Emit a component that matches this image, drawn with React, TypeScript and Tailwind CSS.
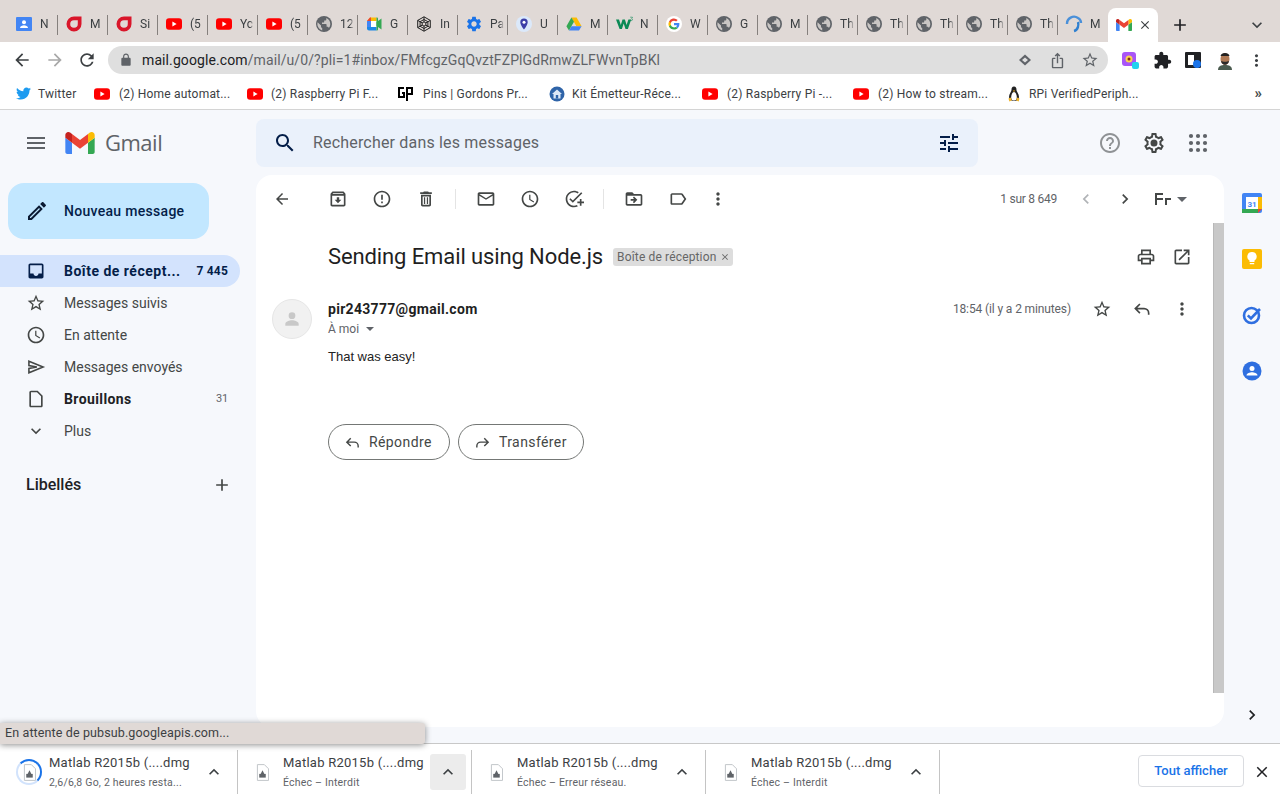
import React from "react";
import { FaTwitter } from "react-icons/fa";

const P = {
  menu: "M3 18h18v-2H3v2zm0-5h18v-2H3v2zm0-7v2h18V6H3z",
  search: "M15.5 14h-.79l-.28-.27C15.41 12.59 16 11.11 16 9.5 16 5.91 13.09 3 9.5 3S3 5.91 3 9.5 5.91 16 9.5 16c1.61 0 3.09-.59 4.23-1.57l.27.28v.79l5 4.99L20.49 19l-4.99-5zm-6 0C7.01 14 5 11.99 5 9.5S7.01 5 9.5 5 14 7.01 14 9.5 11.99 14 9.5 14z",
  tune: "M3 17v2h6v-2H3zM3 5v2h10V5H3zm10 16v-2h8v-2h-8v-2h-2v6h2zM7 9v2H3v2h4v2h2V9H7zm14 4v-2H11v2h10zm-6-4h2V7h4V5h-4V3h-2v6z",
  help: "M11 18h2v-2h-2v2zm1-16C6.48 2 2 6.48 2 12s4.48 10 10 10 10-4.48 10-10S17.52 2 12 2zm0 18c-4.41 0-8-3.59-8-8s3.59-8 8-8 8 3.59 8 8-3.59 8-8 8zm0-14c-2.21 0-4 1.79-4 4h2c0-1.1.9-2 2-2s2 .9 2 2c0 2-3 1.75-3 5h2c0-2.25 3-2.5 3-5 0-2.21-1.79-4-4-4z",
  settings: "M19.43 12.98c.04-.32.07-.64.07-.98 0-.34-.03-.66-.07-.98l2.11-1.65c.19-.15.24-.42.12-.64l-2-3.46c-.09-.16-.26-.25-.44-.25-.06 0-.12.01-.17.03l-2.49 1c-.52-.4-1.08-.73-1.69-.98l-.38-2.65C14.46 2.18 14.25 2 14 2h-4c-.25 0-.46.18-.49.42l-.38 2.65c-.61.25-1.17.59-1.69.98l-2.49-1c-.06-.02-.12-.03-.18-.03-.17 0-.34.09-.43.25l-2 3.46c-.13.22-.07.49.12.64l2.11 1.65c-.04.32-.07.65-.07.98 0 .33.03.66.07.98l-2.11 1.65c-.19.15-.24.42-.12.64l2 3.46c.09.16.26.25.44.25.06 0 .12-.01.17-.03l2.49-1c.52.4 1.08.73 1.69.98l.38 2.65c.03.24.24.42.49.42h4c.25 0 .46-.18.49-.42l.38-2.65c.61-.25 1.17-.59 1.69-.98l2.49 1c.06.02.12.03.18.03.17 0 .34-.09.43-.25l2-3.46c.12-.22.07-.49-.12-.64l-2.11-1.65zm-1.98-1.71c.04.31.05.52.05.73 0 .21-.02.43-.05.73l-.14 1.13.89.7 1.08.84-.7 1.21-1.27-.51-1.04-.42-.9.68c-.43.32-.84.56-1.25.73l-1.06.43-.16 1.13-.2 1.35h-1.4l-.19-1.35-.16-1.13-1.06-.43c-.43-.18-.83-.41-1.23-.71l-.91-.7-1.06.43-1.27.51-.7-1.21 1.08-.84.89-.7-.14-1.13c-.03-.31-.05-.54-.05-.74s.02-.43.05-.73l.14-1.13-.89-.7-1.08-.84.7-1.21 1.27.51 1.04.42.9-.68c.43-.32.84-.56 1.25-.73l1.06-.43.16-1.13.2-1.35h1.39l.19 1.35.16 1.13 1.06.43c.43.18.83.41 1.23.71l.91.7 1.06-.43 1.27-.51.7 1.21-1.07.85-.89.7.14 1.13zM12 8.5a3.5 3.5 0 1 0 0 7 3.5 3.5 0 0 0 0-7z",
  back: "M20 11H7.83l5.59-5.59L12 4l-8 8 8 8 1.41-1.41L7.83 13H20v-2z",
  forward: "M12 4l-1.41 1.41L16.17 11H4v2h12.17l-5.58 5.59L12 20l8-8z",
  reload: "M17.65 6.35C16.2 4.9 14.21 4 12 4c-4.42 0-7.99 3.58-7.99 8s3.57 8 7.99 8c3.73 0 6.84-2.55 7.73-6h-2.08c-.82 2.33-3.04 4-5.65 4-3.31 0-6-2.69-6-6s2.69-6 6-6c1.66 0 3.14.69 4.22 1.78L13 11h7V4l-2.35 2.35z",
  lock: "M18 8h-1V6c0-2.76-2.24-5-5-5S7 3.24 7 6v2H6c-1.1 0-2 .9-2 2v10c0 1.1.9 2 2 2h12c1.1 0 2-.9 2-2V10c0-1.1-.9-2-2-2zM9 6c0-1.66 1.34-3 3-3s3 1.34 3 3v2H9V6z",
  ext: "M20.5 11H19V7c0-1.1-.9-2-2-2h-4V3.5C13 2.12 11.88 1 10.5 1S8 2.12 8 3.5V5H4c-1.1 0-1.99.9-1.99 2v3.8H3.5c1.49 0 2.7 1.21 2.7 2.7s-1.21 2.7-2.7 2.7H2V20c0 1.1.9 2 2 2h3.8v-1.5c0-1.49 1.21-2.7 2.7-2.7 1.49 0 2.7 1.21 2.7 2.7V22H17c1.1 0 2-.9 2-2v-4h1.5c1.38 0 2.5-1.12 2.5-2.5S21.88 11 20.5 11z",
  archive: "M20.54 5.23l-1.39-1.68C18.88 3.21 18.47 3 18 3H6c-.47 0-.88.21-1.15.55L3.46 5.23C3.17 5.57 3 6.02 3 6.5V19c0 1.1.9 2 2 2h14c1.1 0 2-.9 2-2V6.5c0-.48-.17-.93-.46-1.27zM6.24 5h11.52l.83 1H5.42l.82-1zM5 19V8h14v11H5zm8.45-9h-2.9v3H8l4 4 4-4h-2.55z",
  report: "M11 15h2v2h-2zm0-8h2v6h-2zm.99-5C6.47 2 2 6.48 2 12s4.47 10 9.99 10C17.52 22 22 17.52 22 12S17.52 2 11.99 2zM12 20c-4.42 0-8-3.58-8-8s3.58-8 8-8 8 3.58 8 8-3.58 8-8 8z",
  trash: "M16 9v10H8V9h8m-1.5-6h-5l-1 1H5v2h14V4h-3.5l-1-1zM18 7H6v12c0 1.1.9 2 2 2h8c1.1 0 2-.9 2-2V7zM9.5 10H11v8H9.5zM13 10h1.5v8H13z",
  mail: "M20 4H4c-1.1 0-1.99.9-1.99 2L2 18c0 1.1.9 2 2 2h16c1.1 0 2-.9 2-2V6c0-1.1-.9-2-2-2zm0 14H4V8l8 5 8-5v10zm-8-7L4 6h16l-8 5z",
  clock: "M11.99 2C6.47 2 2 6.48 2 12s4.47 10 9.99 10C17.52 22 22 17.52 22 12S17.52 2 11.99 2zM12 20c-4.42 0-8-3.58-8-8s3.58-8 8-8 8 3.58 8 8-3.58 8-8 8zm.5-13H11v6l5.25 3.15.75-1.23-4.5-2.67z",
  addTask: "M22 5.18L10.59 16.6l-4.24-4.24 1.41-1.41 2.83 2.83 10-10L22 5.18zM12 20c-4.41 0-8-3.59-8-8s3.59-8 8-8c1.57 0 3.04.46 4.28 1.25l1.45-1.45C16.1 2.67 14.13 2 12 2 6.48 2 2 6.48 2 12s4.48 10 10 10c1.73 0 3.36-.44 4.78-1.22l-1.5-1.5c-1 .46-2.11.72-3.28.72zm7-5h-3v2h3v3h2v-3h3v-2h-3v-3h-2v3z",
  move: "M20 6h-8l-2-2H4c-1.1 0-1.99.9-1.99 2L2 18c0 1.1.9 2 2 2h16c1.1 0 2-.9 2-2V8c0-1.1-.9-2-2-2zm0 12H4V8h16v10zm-8.01-9l-1.41 1.41L12.16 12H8v2h4.16l-1.59 1.59L11.99 17 16 13.01 11.99 9z",
  label: "M17.63 5.84C17.27 5.33 16.67 5 16 5L5 5.01C3.9 5.01 3 5.9 3 7v10c0 1.1.9 1.99 2 1.99L16 19c.67 0 1.27-.33 1.63-.84L22 12l-4.37-6.16zM16 17H5V7h11l3.55 5L16 17z",
  more: "M12 8c1.1 0 2-.9 2-2s-.9-2-2-2-2 .9-2 2 .9 2 2 2zm0 2c-1.1 0-2 .9-2 2s.9 2 2 2 2-.9 2-2-.9-2-2-2zm0 6c-1.1 0-2 .9-2 2s.9 2 2 2 2-.9 2-2-.9-2-2-2z",
  print: "M19 8h-1V3H6v5H5c-1.66 0-3 1.34-3 3v6h4v4h12v-4h4v-6c0-1.66-1.34-3-3-3zM8 5h8v3H8V5zm8 12v2H8v-4h8v2zm2-2v-2H6v2H4v-4c0-.55.45-1 1-1h14c.55 0 1 .45 1 1v4h-2z",
  open: "M19 19H5V5h7V3H5c-1.11 0-2 .9-2 2v14c0 1.1.89 2 2 2h14c1.1 0 2-.9 2-2v-7h-2v7zM14 3v2h3.59l-9.83 9.83 1.41 1.41L19 6.41V10h2V3h-7z",
  star: "M22 9.24l-7.19-.62L12 2 9.19 8.63 2 9.24l5.46 4.73L5.82 21 12 17.27 18.18 21l-1.63-7.03L22 9.24zM12 15.4l-3.76 2.27 1-4.28-3.32-2.88 4.38-.38L12 6.1l1.71 4.04 4.38.38-3.32 2.88 1 4.28L12 15.4z",
  edit: "M3 17.25V21h3.75L17.81 9.94l-3.75-3.75L3 17.25zM5.92 19H5v-.92l9.06-9.06.92.92L5.92 19zM20.71 5.63l-2.34-2.34c-.2-.2-.45-.29-.71-.29s-.51.1-.7.29l-1.83 1.83 3.75 3.75 1.83-1.83c.39-.39.39-1.02 0-1.41z",
  inbox: "M19 3H5c-1.1 0-2 .9-2 2v14c0 1.1.9 2 2 2h14c1.1 0 2-.9 2-2V5c0-1.1-.9-2-2-2zm0 12h-4c0 1.66-1.35 3-3 3s-3-1.34-3-3H5V5h14v10z",
  draft: "M14 2H6c-1.1 0-1.99.9-1.99 2L4 20c0 1.1.89 2 1.99 2H18c1.1 0 2-.9 2-2V8l-6-6zM18 20H6V4h7.17L18 8.83V20z",
  down: "M16.59 8.59L12 13.17 7.41 8.59 6 10l6 6 6-6z",
  up: "M12 8l-6 6 1.41 1.41L12 10.83l4.59 4.58L18 14z",
  add: "M19 13h-6v6h-2v-6H5v-2h6V5h2v6h6v2z",
  left: "M15.41 7.41L14 6l-6 6 6 6 1.41-1.41L10.83 12z",
  right: "M10 6L8.59 7.41 13.17 12l-4.58 4.59L10 18l6-6z",
  close: "M19 6.41L17.59 5 12 10.59 6.41 5 5 6.41 10.59 12 5 17.59 6.41 19 12 13.41 17.59 19 19 17.59 13.41 12z",
  share: "M16 5l-1.42 1.42-1.59-1.59V16h-1.98V4.83L9.42 6.42 8 5l4-4 4 4zm4 5v11c0 1.1-.9 2-2 2H6c-1.11 0-2-.9-2-2V10c0-1.11.89-2 2-2h3v2H6v11h12V10h-3V8h3c1.1 0 2 .89 2 2z",
  cog: "M19.14 12.94c.04-.3.06-.61.06-.94 0-.32-.02-.64-.07-.94l2.03-1.58c.18-.14.23-.41.12-.61l-1.92-3.32c-.12-.22-.37-.29-.59-.22l-2.39.96c-.5-.38-1.03-.7-1.62-.94l-.36-2.54c-.04-.24-.24-.41-.48-.41h-3.84c-.24 0-.43.17-.47.41l-.36 2.54c-.59.24-1.13.57-1.62.94l-2.39-.96c-.22-.08-.47 0-.59.22L2.74 8.87c-.12.21-.08.47.12.61l2.03 1.58c-.05.3-.09.63-.09.94s.02.64.07.94l-2.03 1.58c-.18.14-.23.41-.12.61l1.92 3.32c.12.22.37.29.59.22l2.39-.96c.5.38 1.03.7 1.62.94l.36 2.54c.05.24.24.41.48.41h3.84c.24 0 .44-.17.47-.41l.36-2.54c.59-.24 1.13-.56 1.62-.94l2.39.96c.22.08.47 0 .59-.22l1.92-3.32c.12-.22.07-.47-.12-.61l-2.01-1.58zM12 15.6c-1.98 0-3.6-1.62-3.6-3.6s1.62-3.6 3.6-3.6 3.6 1.62 3.6 3.6-1.62 3.6-3.6 3.6z",
};

function Mi({ d, size = 20, color = "#444746" }: { d: string; size?: number; color?: string }) {
  return (
    <svg width={size} height={size} viewBox="0 0 24 24" fill={color} className="shrink-0">
      <path d={d} />
    </svg>
  );
}

function ReplyIcon({ flip = false, size = 20, color = "#444746" }: { flip?: boolean; size?: number; color?: string }) {
  return (
    <svg width={size} height={size} viewBox="0 0 24 24" fill="none" stroke={color} strokeWidth={2} className="shrink-0" style={flip ? { transform: "scaleX(-1)" } : undefined}>
      <path d="M9.5 6 4 11.5 9.5 17M4 11.5h10.5a5.5 5.5 0 0 1 5.5 5.5v2" />
    </svg>
  );
}

const SendIcon = ({ color }: { color: string }) => (
  <svg width="20" height="20" viewBox="0 0 24 24" fill="none" stroke={color} strokeWidth="1.9" className="shrink-0">
    <path d="M3.500 5 20.500 12 3.500 19v-5.200L13 12 3.500 10.200z" />
  </svg>
);

const YT = ({ w = 16 }: { w?: number }) => (
  <svg width={w} height={w} viewBox="0 0 16 16" className="shrink-0">
    <rect x="0" y="2.200" width="16" height="11.600" rx="3" fill="#f00" />
    <path d="M6.400 5.600 10.600 8l-4.200 2.400z" fill="#fff" />
  </svg>
);

const Globe = () => (
  <svg width="16" height="16" viewBox="0 0 16 16" className="shrink-0">
    <circle cx="8" cy="8" r="8" fill="#5f6368" />
    <path d="M1.600 6.300 5 9.500v1.200c0 .7.500 1.200 1.200 1.200v2.500A6.600 6.600 0 0 1 1.600 6.300z" fill="#c9c6c4" />
    <path d="M10.300 2c2.300.9 4 3.200 4 6 0 1.500-.5 2.900-1.400 4-.3-.7-.9-1.200-1.600-1.200h-.7V8.700c0-.4-.3-.7-.7-.7H6V6.600h1.500c.4 0 .7-.3.7-.7V4.500h1.300c.5 0 .8-.4.8-.8z" fill="#c9c6c4" />
  </svg>
);

const Contacts = () => (
  <svg width="16" height="16" viewBox="0 0 16 16" className="shrink-0">
    <rect width="16" height="14" y="1" rx="1" fill="#4285f4" />
    <circle cx="8" cy="6.200" r="2" fill="#fff" />
    <path d="M4 12c0-2 2.400-2.800 4-2.800s4 .8 4 2.800z" fill="#fff" />
  </svg>
);

const Opera = () => (
  <svg width="16" height="16" viewBox="0 0 16 16" className="shrink-0">
    <path fillRule="evenodd" d="M8 .5H15.500V8A7.500 7.500 0 1 1 8 .5zM8 4.200H11.800V8A3.800 3.800 0 1 1 8 4.200z" fill="#d9162a" />
  </svg>
);

const Meet = () => (
  <svg width="16" height="16" viewBox="0 0 16 16" className="shrink-0">
    <path d="M4 1.500H10.500V5H1z" fill="#fbbc04" />
    <path d="M4 1.500H5V5H1z" fill="#ea4335" />
    <path d="M1 5h4v6H1z" fill="#4285f4" />
    <path d="M1 11h9.500v3.500H3a2 2 0 0 1-2-2z" fill="#1e88e5" />
    <path d="M5 5h5.500v6H5z" fill="#fff" />
    <path d="M10.500 1.500h.5a1 1 0 0 1 1 1V13.500a1 1 0 0 1-1 1h-.5z" fill="#34a853" />
    <path d="M10.500 6l5-3.500v11L10.500 10z" fill="#34a853" />
  </svg>
);

const Hex = () => (
  <svg width="16" height="16" viewBox="0 0 16 16" fill="none" stroke="#222" strokeWidth="1" className="shrink-0">
    <path d="M8 .8 14.300 4.400v7.200L8 15.200 1.700 11.600V4.400z" />
    <path d="M8 3.500 11.900 5.700v4.600L8 12.500 4.100 10.300V5.700z" />
    <circle cx="8" cy="8" r="2" />
    <path d="M8 .8V6M8 10v5.200M1.700 4.400 6.300 7M9.700 9l4.600 2.600M14.300 4.400 9.700 7M6.300 9l-4.600 2.600" />
  </svg>
);

const Pin = () => (
  <svg width="16" height="16" viewBox="0 0 16 16" className="shrink-0">
    <circle cx="8" cy="8" r="8" fill="#dbe9fb" />
    <path d="M8 2.500a3.700 3.700 0 0 0-3.700 3.700C4.300 9 8 13.500 8 13.500s3.700-4.500 3.700-7.300A3.700 3.700 0 0 0 8 2.500z" fill="#3c3fa8" />
    <circle cx="8" cy="6.200" r="1.500" fill="#fff" />
  </svg>
);

const Drive = () => (
  <svg width="16" height="16" viewBox="0 0 16 16" className="shrink-0">
    <path d="M5.400 1.500h5.200l5 8.800h-5.200z" fill="#fbbc04" />
    <path d="M5.400 1.500 0.400 10.300 3 14.500l5-8.700z" fill="#34a853" />
    <path d="M3 14.500h10l2.600-4.200H5.500z" fill="#4285f4" />
  </svg>
);

const W3 = () => (
  <svg width="17" height="16" viewBox="0 0 17 16" className="shrink-0">
    <path d="M0 3.500h3l1.800 5.500L6.500 3.500h2.400l1.700 5.500 1.800-5.500h2.800l-3.300 9.500H9.500L7.700 7.600 5.900 13H3.600z" fill="#0b8a55" />
    <path d="M14.200 1.200h2.200v.7l-.8.7c.6.100.9.500.9 1s-.5 1-1.200 1-1.100-.3-1.200-.7" fill="none" stroke="#0b8a55" strokeWidth=".6" />
  </svg>
);

const GoogleG = () => (
  <svg width="16" height="16" viewBox="0 0 16 16" className="shrink-0">
    <circle cx="8" cy="8" r="8" fill="#fff" />
    <path d="M13.400 8.100c0-.4 0-.8-.1-1.100H8v2.200h3a2.600 2.600 0 0 1-1.100 1.700l1.800 1.400c1-1 1.700-2.400 1.700-4.200z" fill="#4285f4" />
    <path d="M8 13.500c1.500 0 2.700-.5 3.700-1.300L9.900 10.900c-.5.300-1.100.5-1.900.5-1.400 0-2.700-1-3.100-2.300H3v1.400A5.500 5.500 0 0 0 8 13.500z" fill="#34a853" />
    <path d="M4.900 9.100a3.300 3.300 0 0 1 0-2.200V5.500H3a5.500 5.500 0 0 0 0 5z" fill="#fbbc05" />
    <path d="M8 4.700c.8 0 1.500.3 2.100.8l1.600-1.600A5.500 5.500 0 0 0 3 5.500l1.900 1.400C5.300 5.600 6.600 4.700 8 4.700z" fill="#ea4335" />
  </svg>
);

const Arc = () => (
  <svg width="18" height="18" viewBox="0 0 18 18" fill="none" className="shrink-0">
    <path d="M2 9a7 7 0 0 1 11-6c2 1 3 3 3 5" stroke="#4a90d9" strokeWidth="2.400" />
    <path d="M13 7c1 3 0 8-4 9" stroke="#2f80d0" strokeWidth="2.400" />
  </svg>
);

const GmailLogo = ({ w = 16, h = 12 }: { w?: number; h?: number }) => (
  <svg width={w} height={h} viewBox="52 42 88 66" className="shrink-0">
    <path fill="#4285f4" d="M58 108h14V74L52 59v43c0 3.320 2.690 6 6 6" />
    <path fill="#34a853" d="M120 108h14c3.320 0 6-2.690 6-6V59l-20 15" />
    <path fill="#fbbc04" d="M120 48v26l20-15v-8c0-7.420-8.470-11.650-14.400-7.200" />
    <path fill="#ea4335" d="M72 74V48l24 18 24-18v26L96 92" />
    <path fill="#c5221f" d="M52 51v8l20 15V48l-5.600-4.200c-5.940-4.450-14.400-.22-14.400 7.200" />
  </svg>
);

const tabs: { icon: React.ReactNode; text: string }[] = [
  { icon: <Contacts />, text: "N" },
  { icon: <Opera />, text: "M" },
  { icon: <Opera />, text: "Si" },
  { icon: <YT />, text: "(5" },
  { icon: <YT />, text: "Yc" },
  { icon: <YT />, text: "(5" },
  { icon: <Globe />, text: "12" },
  { icon: <Meet />, text: "G" },
  { icon: <Hex />, text: "In" },
  { icon: <Mi d={P.cog} size={18} color="#1a73e8" />, text: "Pa" },
  { icon: <Pin />, text: "U" },
  { icon: <Drive />, text: "M" },
  { icon: <W3 />, text: "N" },
  { icon: <GoogleG />, text: "W" },
  { icon: <Globe />, text: "G" },
  { icon: <Globe />, text: "M" },
  { icon: <Globe />, text: "Th" },
  { icon: <Globe />, text: "Th" },
  { icon: <Globe />, text: "Th" },
  { icon: <Globe />, text: "Th" },
  { icon: <Globe />, text: "Th" },
  { icon: <Arc />, text: "M" },
];

const bookmarks: { w: string; ml: string; icon: React.ReactNode; text: string }[] = [
  { w: "w-[79px]", ml: "ml-[7px]", icon: <FaTwitter size={15} color="#1d9bf0" className="shrink-0" />, text: "Twitter" },
  { w: "w-[153px]", ml: "ml-[9px]", icon: <YT />, text: "(2) Home automat..." },
  { w: "w-[151px]", ml: "ml-[8px]", icon: <YT />, text: "(2) Raspberry Pi F..." },
  {
    w: "w-[151px]",
    ml: "ml-[9px]",
    icon: (
      <svg width="18" height="16" viewBox="0 0 18 16" fill="none" stroke="#000" strokeWidth="2" className="shrink-0">
        <path d="M7 2H2v9h5V7H5M10 15V2h5v6h-5" />
      </svg>
    ),
    text: "Pins | Gordons Pr...",
  },
  {
    w: "w-[153px]",
    ml: "ml-[7px]",
    icon: (
      <svg width="16" height="16" viewBox="0 0 16 16" className="shrink-0">
        <circle cx="8" cy="8" r="7.500" fill="#2f64a8" />
        <path d="M8 3.500 13 8h-1.500v4.500h-7V8H3z" fill="#dce8f7" />
        <rect x="6.800" y="9" width="2.400" height="3.500" fill="#2f64a8" />
      </svg>
    ),
    text: "Kit Émetteur-Réce...",
  },
  { w: "w-[151px]", ml: "ml-[9px]", icon: <YT />, text: "(2) Raspberry Pi -..." },
  { w: "w-[153px]", ml: "ml-[9px]", icon: <YT />, text: "(2) How to stream..." },
  {
    w: "w-[150px]",
    ml: "ml-[7px]",
    icon: (
      <svg width="16" height="16" viewBox="0 0 16 16" className="shrink-0">
        <path d="M8 .5c-2 0-2.600 1.800-2.500 3.500.1 1.500-2.500 4-2.500 7 0 2 2 4 5 4s5-2 5-4c0-3-2.600-5.500-2.500-7C10.600 2.300 10 .5 8 .5z" fill="#222" />
        <path d="M8 6c-1.700 0-2.800 3-2.800 5.500S6.500 14.500 8 14.500s2.800-.5 2.800-3S9.700 6 8 6z" fill="#fff" />
        <path d="M6.800 4.500h2.400L8 6z" fill="#f0b429" />
        <path d="M2.500 12.500 5 11.500l.8 3-2.500 1zM13.500 12.500 11 11.500l-.8 3 2.500 1z" fill="#f0b429" />
      </svg>
    ),
    text: "RPi VerifiedPeriph...",
  },
];

const navRows: { d?: string; text: string; count?: string; active?: boolean; bold?: boolean }[] = [
  { d: P.inbox, text: "Boîte de récept...", count: "7 445", active: true, bold: true },
  { d: P.star, text: "Messages suivis" },
  { d: P.clock, text: "En attente" },
  { text: "Messages envoyés" },
  { d: P.draft, text: "Brouillons", count: "31", bold: true },
  { d: P.down, text: "Plus" },
];

const downloads = [
  { sub: "2,6/6,8 Go, 2 heures resta...", active: false },
  { sub: "Échec – Interdit", active: true },
  { sub: "Échec – Erreur réseau.", active: false },
  { sub: "Échec – Interdit", active: false },
];

function ToolBtn({ d, w = "w-[44px]", size = 20, color = "#444746" }: { d: string; w?: string; size?: number; color?: string }) {
  return (
    <div className={`${w} h-[32px] flex items-center justify-center shrink-0`}>
      <Mi d={d} size={size} color={color} />
    </div>
  );
}

function DownloadFile() {
  return (
    <svg width="13" height="17" viewBox="0 0 14 18" className="shrink-0">
      <path d="M1.500.5h7.500l4.500 4.500v12.500h-12z" fill="#fff" stroke="#bdc1c6" />
      <rect x="3.500" y="10.500" width="7" height="4" fill="#5f6368" />
      <path d="M7 6.500l2 4H5z" fill="#5f6368" />
    </svg>
  );
}

export default function App() {
  return (
    <div className="relative w-[1280px] h-[800px] overflow-hidden flex flex-col bg-white font-['Roboto',sans-serif] text-[#202124]">
      {/* Tab strip */}
      <div className="h-[42px] bg-[#e0d9d6] flex items-end pl-2 shrink-0">
        {tabs.map((t, i) => (
          <div key={i} className="w-[50px] h-[34px] flex items-center shrink-0 pl-2 pb-[2px] relative">
            <div className="w-4 flex justify-center shrink-0">{t.icon}</div>
            <div className="ml-[8px] w-[14px] overflow-hidden whitespace-nowrap text-[12px] text-[#3c4043] [mask-image:linear-gradient(to_right,black_70%,transparent)]">{t.text}</div>
            {i < 21 && <div className="absolute right-0 top-[7px] h-[20px] w-px bg-[#85807d]" />}
          </div>
        ))}
        <div className="w-[50px] h-[34px] bg-white rounded-t-[8px] flex items-center pl-2 gap-[6px] shrink-0">
          <GmailLogo />
          <Mi d={P.close} size={14} color="#3c4043" />
        </div>
        <div className="w-[44px] h-[34px] flex items-center justify-center shrink-0">
          <Mi d={P.add} size={20} color="#202124" />
        </div>
        <div className="flex-1 h-[34px] flex items-center justify-end pr-[13px]">
          <Mi d={P.down} size={20} color="#3c4043" />
        </div>
      </div>

      {/* Address bar */}
      <div className="h-[36px] bg-white flex items-center shrink-0">
        <div className="w-[108px] flex items-center shrink-0">
          <div className="w-[44px] flex justify-center"><Mi d={P.back} size={20} color="#3c4043" /></div>
          <div className="w-[22px] flex justify-center"><Mi d={P.forward} size={20} color="#a8a8a8" /></div>
          <div className="w-[42px] flex justify-center"><Mi d={P.reload} size={20} color="#3c4043" /></div>
        </div>
        <div className="w-[1000px] h-[28px] bg-[#dfdfdf] rounded-full flex items-center pl-[11px] pr-[9px] shrink-0">
          <Mi d={P.lock} size={14} color="#5f6368" />
          <div className="ml-[9px] flex-1 text-[14px] tracking-[0.1px] whitespace-nowrap text-[#5f6368]">
            <span className="text-[#202124]">mail.google.com</span>/mail/u/0/?pli=1#inbox/FMfcgzGqQvztFZPlGdRmwZLFWvnTpBKl
          </div>
          <svg width="16" height="16" viewBox="0 0 16 16" className="shrink-0 mr-[16px]">
            <path d="M8 2.500 14 8l-6 5.500L2 8z" fill="#5f6368" />
            <path d="M8 5.500 11 8l-3 2.500L5 8z" fill="#dfdfdf" />
          </svg>
          <Mi d={P.share} size={17} color="#5f6368" />
          <div className="ml-[15px]"><Mi d={P.star} size={18} color="#5f6368" /></div>
        </div>
        <div className="flex items-center ml-[13px]">
          <svg width="18" height="18" viewBox="0 0 18 18" className="shrink-0">
            <rect x="1" y="1" width="14" height="14" rx="3" fill="#a855f7" />
            <circle cx="8" cy="8" r="3.500" fill="#fcd34d" />
            <circle cx="8" cy="8" r="1.500" fill="#7c2d12" />
            <rect x="11" y="11" width="7" height="7" rx="2" fill="#22d3ee" />
          </svg>
          <div className="ml-[14px]"><Mi d={P.ext} size={19} color="#202124" /></div>
          <div className="ml-[13px] relative w-[16px] h-[16px] border-[3px] border-[#202124] border-r-[7px] rounded-[1px] bg-white">
            <div className="absolute right-[-7px] bottom-[-3px] w-[8px] h-[8px] rounded-full bg-[#1a73e8]" />
          </div>
          <svg width="18" height="20" viewBox="0 0 18 20" className="shrink-0 ml-[15px]">
            <path d="M2 20c0-4 3-5 7-5s7 1 7 5z" fill="#4b5b4f" />
            <ellipse cx="9" cy="9" rx="4.500" ry="6" fill="#b07a55" />
            <path d="M4.500 6C5 2 13 2 13.500 6z" fill="#222" />
            <path d="M5 11c1 5 7 5 8 0-2 1-6 1-8 0z" fill="#2a2a2a" />
          </svg>
          <div className="ml-[13px]"><Mi d={P.more} size={19} color="#3c4043" /></div>
        </div>
      </div>

      {/* Bookmarks */}
      <div className="h-[32px] bg-white flex items-center pl-[15px] shrink-0 border-b border-[#d4d4d4]">
        {bookmarks.map((b, i) => (
          <div key={i} className={`${b.w} flex items-center shrink-0`}>
            <div className="w-4 flex justify-center shrink-0">{b.icon}</div>
            <span className={`${b.ml} text-[12px] tracking-[0.2px] text-[#3c4043] whitespace-nowrap`}>{b.text}</span>
          </div>
        ))}
        <span className="ml-auto mr-[18px] text-[15px] font-bold text-[#444746]">»</span>
      </div>

      {/* Gmail */}
      <div className="flex-1 min-h-0 bg-[#f6f8fc] flex flex-col">
        <div className="h-[65px] flex items-center shrink-0">
          <div className="w-[256px] flex items-center shrink-0 pl-[24px]">
            <Mi d={P.menu} size={24} color="#5f6368" />
            <div className="ml-[17px]"><GmailLogo w={30} h={22} /></div>
            <span className="ml-[10px] text-[22px] text-[#5f6368] font-['Open_Sans',sans-serif] tracking-[-0.5px]">Gmail</span>
          </div>
          <div className="w-[722px] h-[48px] bg-[#eaf1fb] rounded-[8px] flex items-center pl-[17px] pr-[17px] shrink-0">
            <Mi d={P.search} size={24} color="#041e49" />
            <span className="ml-[16px] flex-1 text-[16px] tracking-[0.18px] text-[#5f6368]">Rechercher dans les messages</span>
            <Mi d={P.tune} size={24} color="#041e49" />
          </div>
          <div className="ml-[120px]"><Mi d={P.help} size={24} color="#8f9295" /></div>
          <div className="ml-[20px]"><Mi d={P.settings} size={24} color="#444746" /></div>
          <div className="ml-[20px]">
            <svg width="24" height="24" viewBox="0 0 24 24" fill="#5f6368" className="shrink-0">
              {[5, 12, 19].map((y) => [5, 12, 19].map((x) => <circle key={`${x}-${y}`} cx={x} cy={y} r="2.100" />))}
            </svg>
          </div>
        </div>

        <div className="flex-1 min-h-0 flex">
          {/* Sidebar */}
          <div className="w-[256px] shrink-0 pt-2">
            <div className="ml-2 w-[201px] h-[56px] bg-[#c2e7ff] rounded-[16px] flex items-center pl-[17px]">
              <Mi d={P.edit} size={24} color="#0b1a33" />
              <span className="ml-[15px] text-[14px] font-medium tracking-[0.3px] text-[#041e49]">Nouveau message</span>
            </div>
            <div className="mt-4 w-[240px]">
              {navRows.map((r) => (
                <div key={r.text} className={`h-[32px] flex items-center pl-[26px] pr-[12px] rounded-r-full ${r.active ? "bg-[#d3e3fd]" : ""}`}>
                  {r.d ? <Mi d={r.d} size={20} color={r.active ? "#041e49" : "#444746"} /> : <SendIcon color="#444746" />}
                  <span className={`ml-[18px] flex-1 text-[14px] whitespace-nowrap ${r.active ? "font-bold tracking-[0.5px] text-[#041e49]" : r.bold ? "font-bold tracking-[0.4px] text-[#202124]" : "text-[#444746]"}`}>{r.text}</span>
                  {r.count && (
                    <span className={r.active ? "text-[12px] font-bold text-[#041e49] tracking-[0.2px]" : "text-[11px] text-[#5f6368] tracking-[-0.2px]"}>{r.count}</span>
                  )}
                </div>
              ))}
            </div>
            <div className="mt-[22px] w-[240px] h-[32px] flex items-center pl-[26px] pr-[8px]">
              <span className="flex-1 text-[16px] font-medium text-[#202124]">Libellés</span>
              <Mi d={P.add} size={20} color="#444746" />
            </div>
          </div>

          {/* Main card */}
          <div className="w-[968px] h-[552px] bg-white rounded-[16px] shrink-0 flex flex-col overflow-hidden">
            <div className="h-[48px] flex items-center pl-[4px] shrink-0">
              <ToolBtn d={P.back} size={18} />
              <div className="w-[12px] shrink-0" />
              <ToolBtn d={P.archive} />
              <ToolBtn d={P.report} />
              <ToolBtn d={P.trash} />
              <div className="w-px h-[20px] bg-[#e4e4e4] ml-[7px] mr-[8px] shrink-0" />
              <ToolBtn d={P.mail} />
              <ToolBtn d={P.clock} />
              <ToolBtn d={P.addTask} />
              <div className="w-px h-[20px] bg-[#e4e4e4] ml-[7px] mr-[8px] shrink-0" />
              <ToolBtn d={P.move} />
              <ToolBtn d={P.label} />
              <ToolBtn d={P.more} w="w-[36px]" />
              <span className="ml-auto text-[12px] tracking-[-0.25px] text-[#5f6368] whitespace-nowrap">1 sur 8 649</span>
              <div className="ml-[19px]"><Mi d={P.left} size={20} color="#b0b3b6" /></div>
              <div className="ml-[19px]"><Mi d={P.right} size={20} color="#444746" /></div>
              <svg width="16" height="12" viewBox="0 0 16 12" fill="#444746" className="shrink-0 ml-[20px]">
                <path d="M0 0h8v2H2v3h6v2H2v5H0zM10 5h6v2h-4v5h-2z" />
              </svg>
              <svg width="10" height="5" viewBox="0 0 10 5" fill="#5f6368" className="shrink-0 ml-[6px] mr-[37px]">
                <path d="M0 0h10L5 5z" />
              </svg>
            </div>
            <div className="flex-1 min-h-0 flex">
              <div className="flex-1 min-w-0 pl-[16px] pr-[21px]">
                <div className="h-[68px] flex items-center pl-[56px]">
                  <h1 className="text-[22px] font-normal tracking-[-0.11px] text-[#1f1f1f] whitespace-nowrap mb-[2px]">Sending Email using Node.js</h1>
                  <div className="ml-[10px] h-[18px] bg-[#dddddd] rounded-[3px] flex items-center pl-[4px] pr-[3px] text-[12px] tracking-[0.15px] text-[#666666] whitespace-nowrap">
                    Boîte de réception
                    <div className="ml-[4px]"><Mi d={P.close} size={10} color="#666666" /></div>
                  </div>
                  <div className="ml-auto flex items-center">
                    <Mi d={P.print} size={20} color="#444746" />
                    <div className="ml-[16px]"><Mi d={P.open} size={20} color="#444746" /></div>
                  </div>
                </div>
                <div className="flex mt-[8px]">
                  <div className="w-[40px] h-[40px] rounded-full bg-[#f1f1f1] border border-[#e6e6e6] flex items-center justify-center shrink-0">
                    <svg width="20" height="20" viewBox="0 0 24 24" fill="#c8c8c8">
                      <circle cx="12" cy="8" r="4" />
                      <path d="M4 20v-2c0-3 5-4.500 8-4.500s8 1.500 8 4.500v2z" />
                    </svg>
                  </div>
                  <div className="ml-[16px] flex-1">
                    <div className="flex items-start">
                      <div>
                        <div className="text-[14px] font-bold tracking-[0.3px] text-[#1f1f1f] leading-[20px]">pir243777@gmail.com</div>
                        <div className="flex items-center mt-[1px] h-[18px] text-[12px] text-[#5f6368]">
                          À moi
                          <svg width="8" height="4" viewBox="0 0 8 4" fill="#5f6368" className="ml-[7px]"><path d="M0 0h8L4 4z" /></svg>
                        </div>
                      </div>
                      <span className="ml-auto text-[12px] tracking-[-0.12px] text-[#5f6368] leading-[20px] whitespace-nowrap">18:54 (il y a 2 minutes)</span>
                      <div className="ml-[21px]"><Mi d={P.star} size={20} color="#444746" /></div>
                      <div className="ml-[20px]"><ReplyIcon /></div>
                      <div className="ml-[20px]"><Mi d={P.more} size={20} color="#444746" /></div>
                    </div>
                    <div className="mt-[10px] text-[13px] leading-[18px] text-[#222222] font-['Liberation_Sans',sans-serif]">That was easy!</div>
                    <div className="mt-[58px] flex gap-2">
                      <div className="w-[122px] h-[36px] rounded-full border border-[#747775] flex items-center pl-[15px]">
                        <ReplyIcon size={17} />
                        <span className="ml-[8px] text-[14px] tracking-[0.4px] text-[#444746]">Répondre</span>
                      </div>
                      <div className="w-[126px] h-[36px] rounded-full border border-[#747775] flex items-center pl-[15px]">
                        <ReplyIcon flip size={17} />
                        <span className="ml-[8px] text-[14px] tracking-[0.4px] text-[#444746]">Transférer</span>
                      </div>
                    </div>
                  </div>
                </div>
              </div>
              <div className="w-[11px] shrink-0">
                <div className="h-[470px] bg-[#c8c8c8] border-l border-[#b8b8b8]" />
              </div>
            </div>
          </div>

          {/* Right rail */}
          <div className="w-[56px] shrink-0 flex flex-col items-center pt-[18px] pb-[2px] h-[552px]">
            <svg width="20" height="20" viewBox="0 0 20 20" className="shrink-0">
              <rect width="20" height="20" rx="2" fill="#4285f4" />
              <rect x="4" y="4" width="12" height="12" fill="#fff" />
              <rect x="16" y="4" width="4" height="12" fill="#fbbc04" />
              <rect y="16" width="16" height="4" fill="#34a853" />
              <path d="M16 16h4l-4 4z" fill="#ea4335" />
              <text x="10" y="13.500" textAnchor="middle" fontSize="8" fontWeight="700" fill="#4285f4" fontFamily="Roboto">31</text>
            </svg>
            <div className="mt-[36px] w-[20px] h-[20px] bg-[#fbbc04] rounded-[2px] flex items-center justify-center">
              <svg width="12" height="14" viewBox="0 0 12 14" fill="#fff">
                <path d="M6 0a4.600 4.600 0 0 0-2.500 8.500v1.500h5V8.500A4.600 4.600 0 0 0 6 0zM3.800 11h4.400v1.200H3.800z" />
              </svg>
            </div>
            <svg width="20" height="20" viewBox="0 0 20 20" fill="none" className="shrink-0 mt-[36px]">
              <circle cx="9.500" cy="10.500" r="7.500" stroke="#2f6fe0" strokeWidth="2.600" />
              <path d="M5.800 10.300 9 13.500 18 4" stroke="#2f6fe0" strokeWidth="2.600" />
            </svg>
            <svg width="20" height="20" viewBox="0 0 20 20" className="shrink-0 mt-[36px]">
              <circle cx="10" cy="10" r="9.500" fill="#2f6fe0" />
              <circle cx="10" cy="7.500" r="2.500" fill="#fff" />
              <path d="M4.500 14.500c0-2.500 3.500-3.300 5.500-3.300s5.500.8 5.500 3.300z" fill="#fff" />
            </svg>
            <div className="mt-auto"><Mi d={P.right} size={20} color="#202124" /></div>
          </div>
        </div>
        <div className="h-[16px] shrink-0" />
      </div>

      {/* Download shelf */}
      <div className="h-[57px] shrink-0 bg-white border-t border-[#c8c8c8] flex items-center">
        {downloads.map((d, i) => (
          <div key={i} className={`${i === 0 ? "w-[238px]" : "w-[234px]"} h-[44px] border-r border-[#c4c4c4] flex items-center shrink-0 relative`}>
            <div className={`${i === 0 ? "ml-[16px] w-[26px] h-[26px] rounded-full border-2 border-[#d2e3fc] border-t-[#1a73e8] border-r-[#1a73e8]" : "ml-[16px] w-[16px]"} flex items-center justify-center shrink-0`}>
              <DownloadFile />
            </div>
            <div className={`${i === 0 ? "ml-[7px]" : "ml-[13px]"} w-[150px] shrink-0`}>
              <div className="text-[13px] leading-[18px] tracking-[0.25px] text-[#3c4043] whitespace-nowrap">Matlab R2015b (....dmg</div>
              <div className="text-[10.5px] leading-[14px] tracking-[0.2px] mt-[4px] text-[#5f6368] whitespace-nowrap">{d.sub}</div>
            </div>
            <div className={`absolute right-[5px] top-[4px] w-[36px] h-[36px] rounded-[3px] flex items-center justify-center ${d.active ? "bg-[#ececec]" : ""}`}>
              <Mi d={P.up} size={20} color="#3c4043" />
            </div>
          </div>
        ))}
        <div className="ml-auto mb-[2px] w-[106px] h-[32px] border border-[#dadce0] rounded-[4px] flex items-center justify-center text-[13px] font-medium text-[#1a73e8]">Tout afficher</div>
        <div className="ml-[9px] mr-[9px]"><Mi d={P.close} size={18} color="#202124" /></div>
      </div>

      {/* Status bubble */}
      <div className="absolute left-0 top-[723px] w-[425px] h-[21px] bg-[#e0d9d6] rounded-tr-[3px] rounded-br-[3px] shadow-[0_1px_6px_rgba(0,0,0,0.45)] flex items-center pl-[5px] text-[12.5px] tracking-[0.12px] text-[#3c4043] whitespace-nowrap">
        En attente de pubsub.googleapis.com...
      </div>
    </div>
  );
}
